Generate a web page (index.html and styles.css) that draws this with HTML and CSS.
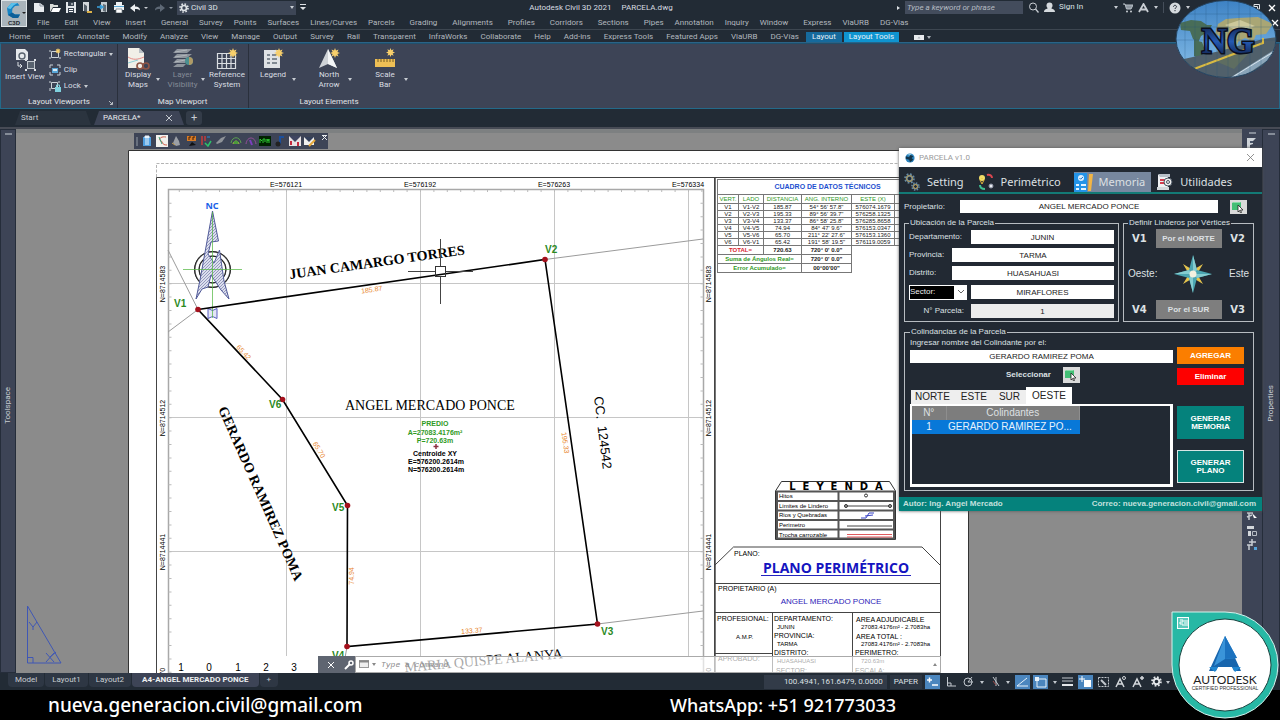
FILE: index.html
```html
<!DOCTYPE html>
<html lang="es">
<head>
<meta charset="utf-8">
<title>Autodesk Civil 3D 2021 - PARCELA.dwg</title>
<link rel="stylesheet" href="styles.css">
</head>
<body>
<svg class="defs" aria-hidden="true">
  <defs>
    <symbol id="sun" viewBox="0 0 10 10"><path d="M5 0l1 2.6L8.5 1.500 7.400 4 10 5 7.400 6 8.500 8.500 6 7.400 5 10 4 7.400 1.500 8.500 2.600 6 0 5 2.600 4 1.500 1.500 4 2.600z" fill="#f7cf6b"/></symbol>
    <symbol id="gear" viewBox="0 0 12 12"><circle cx="6" cy="6" r="3" fill="none" stroke="currentColor" stroke-width="2"/><circle cx="6" cy="6" r="4.800" fill="none" stroke="currentColor" stroke-width="2" stroke-dasharray="1.900 1.870"/></symbol>
    <symbol id="pick" viewBox="0 0 14 12"><path d="M1 2l2-1h7v8H1z" fill="#43bf75"/><path d="M1 2l2-1h7l-1 1z" fill="#8adba8"/><path d="M7 4l5 5H9.500l1 2.500-1 .500-1-2.500L7 11z" fill="#fff" stroke="#222" stroke-width=".8"/></symbol>
    <symbol id="earth" viewBox="0 0 12 12"><circle cx="6" cy="6" r="5.500" fill="#2b83bd"/><path d="M1 4l4 1 1-3 4 2-2 2 2 2-4 3-1-3-4-1z" fill="#123449"/><path d="M3 2l3-1 2 1-3 1z" fill="#8cc9e6"/></symbol>
    <pattern id="hatch" width="3" height="3" patternUnits="userSpaceOnUse"><rect width="3" height="3" fill="#dcdfee"/><path d="M0 3L3 0" stroke="#8287b0" stroke-width=".8"/></pattern>
  </defs>
</svg>

<header class="chrome">
  <button class="app-btn" aria-label="C3D">
    <svg width="26" height="27" viewBox="0 0 26 27"><rect x=".5" y=".5" width="25" height="26" fill="#a9b4bb" stroke="#dfe5e8"/><path d="M18.500 5.500l-2-2.500h-6L6 8l1 7 5 3h5l2-3.500h-5l-3-2 .500-4L14 6z" fill="#1583c4"/><path d="M6 8l4.500-5h6l-4 2.500L9.500 9z" fill="#5bc0ea"/><path d="M7 15l4-2.500 3 2h5L17 18h-5z" fill="#0d5f98"/><path d="M21 12h4l-2 2z" fill="#222"/><text x="13" y="25" class="app-txt">C3D</text></svg>
  </button>
  <div class="title-row">
    <div class="qat">
      <button aria-label="Nuevo"><svg width="12" height="11"><path d="M1 1h6l4 3v6H1z" fill="#e8ecef"/><path d="M7 1v3h4" stroke="#8b95a0" fill="none"/></svg></button>
      <button aria-label="Abrir"><svg width="12" height="11"><path d="M1 10V2h3l1 1h4v2H4z" fill="#d9dcd8"/><path d="M2 10l2-4h8l-2 4z" fill="#fff"/></svg></button>
      <button aria-label="Guardar"><svg width="12" height="11"><path d="M1 0h10v11H1z" fill="#e3e7ea"/><path d="M3 0h6v4H3zM3 6h6v5H3z" fill="#37424f"/><path d="M4 7.500h4M4 9.500h4M7 1v2" stroke="#fff"/></svg></button>
      <button aria-label="Abrir web"><svg width="12" height="11"><path d="M2 0h6v9H2z" fill="#d3d7da"/><path d="M3 2l3 2v6L3 9z" fill="#555f68"/><path d="M6 9h5v2H6z" fill="#ddb249"/></svg></button>
      <button aria-label="Guardar web"><svg width="12" height="11"><path d="M4 0h6v10H4z" fill="#c5ccd1"/><path d="M6 2l3 1v7L6 9z" fill="#626e78"/><path d="M0 5h5M3 3l3 2-3 2" stroke="#3ba3df" fill="none" stroke-width="1.500"/></svg></button>
      <button aria-label="Imprimir"><svg width="12" height="11"><path d="M3 0h6v3H3zM1 3h10v5H1z" fill="#eef1f3"/><path d="M1 4h10v1H1z" fill="#5da9d6"/><path d="M3 7h6v4H3z" fill="#fff" stroke="#68737d" stroke-width=".7"/></svg></button>
      <button aria-label="Deshacer"><svg width="20" height="11"><path d="M1 6l5-4v2.500c3 0 5 1 5 4C10 7 8 7 6 7v3z" fill="#edf0f2"/><path d="M15 5h4l-2 2z" fill="#c7ccd2"/></svg></button>
      <button aria-label="Rehacer"><svg width="20" height="11"><path d="M12 6L7 2v2.500c-3 0-5 1-5 4C3 7 5 7 7 7v3z" fill="#5d6875"/><path d="M16 5h4l-2 2z" fill="#9099a3"/></svg></button>
      <label class="workspace-pick"><svg class="gear-ico" width="10" height="10"><use href="#gear"/></svg><select aria-label="Espacio de trabajo"><option>Civil 3D</option></select><i class="caret"></i></label>
      <button aria-label="Personalizar"><svg width="6" height="9"><path d="M0 1h6v1H0zM0 4h6L3 7z" fill="#dde1e5"/></svg></button>
    </div>
    <div class="doc-title">Autodesk Civil 3D 2021 &nbsp; &nbsp; PARCELA.dwg</div>
    <div class="info">
      <i class="play"></i>
      <input class="kw" type="text" aria-label="Buscar" placeholder="Type a keyword or phrase">
      <svg width="11" height="11"><circle cx="5" cy="4.500" r="3.500" fill="none" stroke="#c9ced4"/><path d="M7.500 7l3 3.500" stroke="#c9ced4" stroke-width="1.300"/></svg>
      <button class="sign"><svg width="11" height="11"><circle cx="5.500" cy="3.500" r="3" fill="#d5dade"/><path d="M0 10c0-3 3-3 4-4h3c1 1 4 1 4 4z" fill="#d5dade"/></svg>Sign In</button>
      <i class="caret far"></i>
      <svg width="10" height="10"><path d="M0 1h2l1.500 5H8L10 2H2.500" fill="#8d96a0" stroke="#b8c0c7"/><circle cx="4" cy="8.500" r="1" fill="#c9ced4"/><circle cx="8" cy="8.500" r="1" fill="#c9ced4"/></svg>
      <svg width="11" height="10"><path d="M1 9l4.500-8L10 9M2 6.500h7" stroke="#c9ced4" stroke-width="1.800" fill="none"/></svg>
      <i class="caret"></i><i class="vr"></i>
      <svg width="12" height="12"><circle cx="6" cy="6" r="5.500" fill="#d5dade"/><path d="M4.500 4.800c0-2 3-2 3 0 0 1-1.500 1-1.500 2.200M6 8v1.200" stroke="#222b35" fill="none"/></svg>
      <i class="caret"></i>
    </div>
    <div class="win">
      <button aria-label="Restaurar"><svg width="8" height="8"><path d="M2 2V.5h5.500V5H6M.5 2.500h5v5h-5z" fill="none" stroke="#dfe3e6"/></svg></button>
      <button aria-label="Cerrar"><svg width="8" height="8"><path d="M1 1l6 6M7 1L1 7" stroke="#fff" stroke-width="1.300"/></svg></button>
    </div>
  </div>
  <nav class="menu" aria-label="Menú">
    <button>File</button><button>Edit</button><button>View</button><button>Insert</button><button>General</button><button class="tight">Survey</button><button class="tight">Points</button><button class="tight">Surfaces</button><button class="tight">Lines/Curves</button><button class="tight">Parcels</button><button>Grading</button><button>Alignments</button><button>Profiles</button><button>Corridors</button><button>Sections</button><button>Pipes</button><button class="tight">Annotation</button><button class="tight">Inquiry</button><button class="tight">Window</button><button>Express</button><button class="tight">ViaURB</button><button class="tight">DG-Vias</button>
    <button class="doc-x" aria-label="Cerrar dibujo"><svg width="8" height="8"><path d="M1 1l6 6M7 1L1 7" stroke="#fff" stroke-width="1.300"/></svg></button>
  </nav>
  <nav class="rtabs" aria-label="Cinta">
    <button>Home</button><button>Insert</button><button>Annotate</button><button>Modify</button><button>Analyze</button><button>View</button><button>Manage</button><button>Output</button><button>Survey</button><button>Rail</button><button>Transparent</button><button>InfraWorks</button><button>Collaborate</button><button>Help</button><button>Add-ins</button><button>Express Tools</button><button>Featured Apps</button><button>ViaURB</button><button>DG-Vías</button><button class="on">Layout</button><button class="ctx">Layout Tools</button>
    <button class="mini" aria-label="Minimizar"><svg width="18" height="7"><rect y="1" width="10" height="5" fill="#e8ebee"/><path d="M3.500 4.500h3L5 2.500zM13 2h4l-2 3z" fill="#aab0b8"/></svg></button>
  </nav>
</header>

<section class="ribbon">
  <div class="panel p1">
    <div class="tools">
      <button class="big"><svg width="24" height="24"><path d="M3 1h9l3 3v8H3z" fill="#e6e9ec"/><circle cx="9" cy="8" r="3" fill="none" stroke="#59636f" stroke-width="1.400"/><path d="M5 14v4h4M7 16l2 2-2 2" fill="none" stroke="#dde1e5"/><rect x="14.500" y="13.500" width="7" height="7" fill="#58626f" stroke="#c2c8ce"/><path d="M12 11h2v2h-2zM21 11h2v2h-2zM12 21h2v2h-2zM21 21h2v2h-2z" fill="#dde1e5"/></svg>Insert View</button>
      <div class="stack">
        <button><svg width="12" height="12"><path d="M2.500 3.500h7v6h-7zM1 2v2M1 9v2M11 9v2" fill="none" stroke="#ccd2d8"/><use href="#sun" x="6" y="0" width="6" height="6"/></svg>Rectangular<i class="caret"></i></button>
        <button><svg width="12" height="12"><path d="M1 4V1h3M8 1h3v3M11 8v3H8M4 11H1V8" fill="none" stroke="#ccd2d8"/><rect x="3" y="4" width="6" height="5" fill="#59a7d8"/><path d="M4 5h4v2H4z" fill="#dcecf6"/></svg>Clip</button>
        <button><svg width="12" height="12"><path d="M2.500 2.500h6v6h-6zM1 1v2M10 1v2M1 8v3" fill="none" stroke="#ccd2d8"/><rect x="6" y="7" width="6" height="5" fill="#7fd0dd"/><path d="M7.500 7V5h3v2" fill="none" stroke="#7fd0dd"/></svg>Lock<i class="caret"></i></button>
      </div>
    </div>
    <div class="ptitle">Layout Viewports<svg class="launch" width="4" height="4"><path d="M0 0l3 3M3.500 1v2.500H1" stroke="#d5dade" fill="none" stroke-width=".8"/></svg></div>
  </div>
  <div class="panel p2">
    <div class="tools mid">
      <button class="big"><svg width="24" height="22"><path d="M2 0h11l5 5v15H2z" fill="#f1efe8"/><path d="M13 0l5 5h-5z" fill="#b9bfc5"/><path d="M2 9c5 3 9 3 16 0" stroke="#e58b87" fill="none"/><path d="M2 15l10-3" stroke="#8ed0d6"/><circle cx="14" cy="18" r="3" fill="none" stroke="#8f5647" stroke-width="1.700"/><circle cx="20" cy="18" r="3" fill="none" stroke="#8f5647" stroke-width="1.700"/></svg><span>Display<br>Maps</span><i class="caret"></i></button>
      <button class="big dis"><svg width="24" height="22"><path d="M6 1h15l-5 4H2zM6 6h15l-5 4H2zM6 11h12l-4 4H2zM6 16h9l-3 3H2z" fill="#8d949c"/><path d="M4 4l12-2M4 9l12-2M4 14l10-2" stroke="#b2b7bd"/><circle cx="18" cy="13" r="4" fill="#4b9091"/><path d="M18 9v8a4 4 0 0 0 0-8z" fill="#b09a66"/></svg><span>Layer<br>Visibility</span><i class="caret"></i></button>
      <button class="big"><svg width="24" height="22"><path d="M2.500 5.500h18v15h-18zM7 5v16M11.500 5v16M16 5v16M2 10.500h19M2 15.500h19" fill="none" stroke="#d9dde1" stroke-width="1.200"/><use href="#sun" x="13" y="0" width="10" height="10"/></svg><span>Reference<br>System</span></button>
    </div>
    <div class="ptitle">Map Viewport</div>
  </div>
  <div class="panel p3">
    <div class="tools wide">
      <button class="big"><svg width="24" height="22"><rect x="3" y="2" width="16" height="18" fill="#dfe2e5"/><path d="M6 7h3M6 11h3M6 15h3M11 7h5M11 11h5M11 15h5" stroke="#626c77" stroke-width="1.500"/><use href="#sun" x="13" y="0" width="10" height="10"/></svg><span>Legend</span><i class="caret"></i></button>
      <button class="big"><svg width="24" height="22"><path d="M11 1L2 20l9-4 9 4z" fill="#cfd3d7"/><path d="M11 1v15l9 4z" fill="#f3f5f6"/><use href="#sun" x="13" y="0" width="10" height="10"/></svg><span>North<br>Arrow</span><i class="caret"></i></button>
      <button class="big"><svg width="24" height="22"><rect x="2" y="11" width="20" height="8" fill="#eebf55"/><path d="M5 11v3M8 11v3M11 11v3M14 11v3M17 11v3M20 11v3" stroke="#735a23"/><use href="#sun" x="13" y="0" width="9" height="9"/></svg><span>Scale<br>Bar</span><i class="caret"></i></button>
    </div>
    <div class="ptitle">Layout Elements</div>
  </div>
</section>

<nav class="dtabs" aria-label="Documentos">
  <button class="dt">Start</button>
  <button class="dt on">PARCELA*<svg width="6" height="6"><path d="M0 0l6 6M6 0L0 6" stroke="#c5cad0"/></svg></button>
  <button class="plus">+</button>
</nav>

<main class="work">
  <aside class="rail left"><i class="grip"></i><span>Toolspace</span></aside>
  <div class="canvas">
    <svg class="sheet" width="1226" height="544" viewBox="16 129 1226 544">
      <rect x="16" y="129" width="1226" height="4" fill="#7d8081"/>
      <path d="M128.500 700V150.500H968.500V700" fill="#fff" stroke="#333"/>
      <path d="M156.500 177V163.500H940" fill="none" stroke="#b4b4b4" stroke-dasharray="3 1.500"/>
      <path d="M156.500 700V177.500H940.500V700M714.500 178V700" fill="none" stroke="#444"/>
      <path d="M715.500 178V700" stroke="#777"/>
      <path d="M168.500 700V189.500H703.500V700" fill="none" stroke="#a8a8a8" stroke-width="1.500"/>
      <path d="M286.500 190V656M420.500 190V656M554.500 190V656M688.500 190V656M169 283.500H703M169 417.500H703M169 551.500H703" stroke="#c6c6c6"/>
      <path d="M170 202.800V673M702 202.800V673" stroke="#bbb" stroke-width="3" stroke-dasharray="1 12.400"/>
      <path d="M178.800 191H703" stroke="#bbb" stroke-width="2" stroke-dasharray="1 12.400"/>
      <g class="coord">
        <text x="286" y="187">E=576121</text><text x="420" y="187">E=576192</text><text x="554" y="187">E=576263</text><text x="688" y="187">E=576334</text>
        <text transform="translate(165 284) rotate(-90)">N=8714583</text><text transform="translate(165 418) rotate(-90)">N=8714512</text><text transform="translate(165 552) rotate(-90)">N=8714441</text><text transform="translate(165 686) rotate(-90)">N=8714370</text>
        <text transform="translate(711 284) rotate(-90)">N=8714583</text><text transform="translate(711 418) rotate(-90)">N=8714512</text><text transform="translate(711 552) rotate(-90)">N=8714441</text><text transform="translate(711 686) rotate(-90)">N=8714370</text>
      </g>
      <path d="M168 250L198 309.500 168 332M545 259.500L703 239M597.500 624L703 611M347 646.500L345 658" fill="none" stroke="#9b9b9b"/>
      <circle cx="212.500" cy="269.500" r="15.500" fill="none" stroke="#666" stroke-width="5.500"/><circle cx="212.500" cy="269.500" r="15.500" fill="none" stroke="#fff" stroke-width="3"/><circle cx="212.500" cy="269.500" r="18" fill="none" stroke="#222"/><circle cx="212.500" cy="269.500" r="13.500" fill="none" stroke="#222"/>
      <path d="M212.500 211L218.500 241 211 242 208 254 214 263 219.500 250 224 281 229 299 221 290 211 275 208 287 202 289 196 299 200 280z" fill="url(#hatch)" stroke="#525b99"/>
      <path d="M208 308.500l4.500 2 4.500-2v10l-4.500-2-4.500 2z" fill="#e3e5f6" stroke="#5a5fc0"/>
      <path d="M183 269.500H242M212.500 212V318" stroke="#4db53b" stroke-width=".7"/>
      <text class="nc" x="212" y="209">NC</text>
      <path d="M198 309.500L545 259.500 597.500 624 347 646.500 347.500 505.500 282.500 399.500z" fill="none" stroke="#000" stroke-width="1.600"/>
      <g fill="#a4101c"><circle cx="198" cy="309.500" r="2.800"/><circle cx="545" cy="259.500" r="2.800"/><circle cx="597.500" cy="624" r="2.800"/><circle cx="347" cy="646.500" r="2.800"/><circle cx="347.500" cy="505.500" r="2.800"/><circle cx="282.500" cy="399.500" r="2.800"/></g>
      <g class="vert"><text x="174" y="307">V1</text><text x="545" y="253">V2</text><text x="601" y="635">V3</text><text x="332" y="659">V4</text><text x="332" y="511">V5</text><text x="269" y="408">V6</text></g>
      <g class="dist"><text transform="translate(372 292) rotate(-8)">185.87</text><text transform="translate(242 354) rotate(47)">65.42</text><text transform="translate(317 451) rotate(59)">65.70</text><text transform="translate(354 576) rotate(-90)">74.94</text><text transform="translate(472 633) rotate(-5)">133.37</text><text transform="translate(563 443) rotate(82)">195.33</text></g>
      <g class="owner">
        <text class="b" transform="translate(290 279) rotate(-8)">JUAN CAMARGO TORRES</text>
        <text class="b" transform="translate(218 409) rotate(66)">GERARDO RAMIREZ POMA</text>
        <text transform="translate(405 672) rotate(-5)">MARIA QUISPE ALANYA</text>
        <text x="345" y="410">ANGEL MERCADO PONCE</text>
      </g>
      <text class="cc" transform="translate(594 397) rotate(83)">CC.  124542</text>
      <g class="info-c"><g fill="#2f9a1e"><text x="435" y="426">PREDIO</text><text x="435" y="435">A=27083.4176m²</text><text x="435" y="443">P=720.63m</text></g><text x="435" y="456">Centroide XY</text><text x="436" y="464">E=576200.2614m</text><text x="436" y="472">N=576200.2614m</text></g>
      <path d="M436 444v5M433.500 446.500h5" stroke="#8c3040" stroke-width="1.500"/>
      <path d="M440.500 239V266M440.500 277V304M408 271.500H435M446 271.500H473" stroke="#444"/><rect x="435.500" y="266.500" width="10" height="10" fill="none" stroke="#333"/>
      <g class="scale"><text x="181" y="671">1</text><text x="209" y="671">0</text><text x="238" y="671">1</text><text x="266" y="671">2</text><text x="294" y="671">3</text></g>
      <g fill="none" stroke="#3f57b5"><path d="M27.500 606V663H61zM27.500 657.500h5.500v5.500M29 622l4 5 4-5M33 627v3M46 653l8 9M54 653l-8 9M50 657l6-5"/></g>

      <g><path d="M775.500 539.500V491l6-9.500h108l6 9.500v48.500z" fill="#fff" stroke="#333"/><path d="M776 491.500H895M776 501H895M776 510.500H895M776 520H895M776 529.500H895" stroke="#555" stroke-width="2"/><path d="M777 491V539M838.500 491V539M894 491V539M776 538.500H895" stroke="#555" stroke-width="2"/>
      <text class="ley" x="836" y="490">L  E  Y  E  N  D  A</text>
      <g class="leg"><text x="779" y="498">Hitos</text><text x="779" y="508">Limites de Lindero</text><text x="779" y="517">Rios y Quebradas</text><text x="779" y="527">Perimetro</text><text x="779" y="537">Trocha carrozable</text></g>
      <circle cx="866" cy="495.500" r="1.500" fill="none" stroke="#333"/><path d="M846 506H890M847 526H892" stroke="#444"/><circle cx="846" cy="506" r="1.500" fill="#999" stroke="#333"/><circle cx="890" cy="506" r="1.500" fill="#999" stroke="#333"/><path d="M861 518h5l3-5h5M865 516l8-1" fill="none" stroke="#3742c4"/><path d="M847 534.500H892M847 537H892" stroke="#e0595c"/></g>

      <path d="M715 565L733.500 547H922L940 565M715 583.500H940M715 612.500H940M772.500 612V673M852.500 612V673M715 653.500H772" fill="none" stroke="#444"/>
      <g class="blk"><text x="734" y="556">PLANO:</text><text x="718" y="591">PROPIETARIO (A)</text><text x="717" y="621">PROFESIONAL:</text><text x="774" y="621">DEPARTAMENTO:</text><text x="774" y="638">PROVINCIA:</text><text x="774" y="655">DISTRITO:</text><text x="776" y="673">SECTOR:</text><text x="856" y="622">AREA ADJUDICABLE</text><text x="856" y="639">AREA TOTAL :</text><text x="855" y="655">PERIMETRO:</text><text x="855" y="673">ESCALA:</text><text x="718" y="661">APROBADO:</text></g>
      <g class="blks"><text x="736" y="639">A.M.P.</text><text x="777" y="629">JUNIN</text><text x="777" y="646">TARMA</text><text x="777" y="663">HUASAHUASI</text><text x="861" y="629">27083.4176m² - 2.7083ha</text><text x="861" y="646">27083.4176m² - 2.7083ha</text><text x="861" y="663">720.63m</text></g>
      <text class="plano" x="836" y="573">PLANO PERIMÉTRICO</text><path d="M761 575.500H911" stroke="#2323c0"/>
      <text class="own2" x="831" y="604">ANGEL MERCADO PONCE</text>
    </svg>

    <table class="cuadro">
      <colgroup><col class="c1"><col class="c2"><col class="c3"><col class="c4"><col class="c5"><col class="c5"></colgroup>
      <thead><tr><th class="cap" colspan="6">CUADRO DE DATOS TÉCNICOS</th></tr>
      <tr class="hd"><th>VERT.</th><th>LADO</th><th>DISTANCIA</th><th>ANG. INTERNO</th><th>ESTE (X)</th><th></th></tr></thead>
      <tbody>
      <tr><td>V1</td><td>V1-V2</td><td>185.87</td><td>54° 56' 57.8"</td><td>576074.1679</td><td></td></tr>
      <tr><td>V2</td><td>V2-V3</td><td>195.33</td><td>89° 56' 39.7"</td><td>576258.1325</td><td></td></tr>
      <tr><td>V3</td><td>V3-V4</td><td>133.37</td><td>86° 58' 25.8"</td><td>576285.8658</td><td></td></tr>
      <tr><td>V4</td><td>V4-V5</td><td>74.94</td><td>84° 47' 9.6"</td><td>576153.0347</td><td></td></tr>
      <tr><td>V5</td><td>V5-V6</td><td>65.70</td><td>211° 22' 27.6"</td><td>576153.1360</td><td></td></tr>
      <tr><td>V6</td><td>V6-V1</td><td>65.42</td><td>191° 58' 19.5"</td><td>576119.0059</td><td></td></tr>
      </tbody>
      <tfoot>
      <tr><td class="red" colspan="2">TOTAL=</td><td>720.63</td><td>720° 0' 0.0"</td></tr>
      <tr><td class="grn" colspan="3">Suma de Ángulos Real=</td><td>720° 0' 0.0"</td></tr>
      <tr><td class="grn" colspan="3">Error Acumulado=</td><td>00°00'00"</td></tr>
      </tfoot>
    </table>

    <div class="float-bar">
      <i class="vgrip"></i>
      <button aria-label="Portapapeles"><svg width="12" height="12"><rect x="2" y="2" width="8" height="9" fill="#4f9fe0"/><path d="M4 1h4v2H4zM4 5h4M4 7h4M4 9h4" stroke="#e8f3fc" fill="#e8f3fc"/></svg></button>
      <button aria-label="Curva"><svg width="12" height="12"><rect width="12" height="12" fill="#f2f2ee"/><path d="M10 2C4 1 2 5 5 6s0 4 6 4" fill="none" stroke="#cf5d49"/><path d="M3 2l3 7" stroke="#3a9b75"/></svg></button>
      <button aria-label="Punto"><svg width="12" height="12"><path d="M3 8l3-7 3 5 1 4-4 1z" fill="#9b9fa5"/><path d="M2 8l3 2" stroke="#c7a457"/></svg></button>
      <button aria-label="Etiqueta"><svg width="12" height="12"><rect x="2" y="1" width="9" height="5" fill="#d77b25"/><path d="M4 11l3-4 4 3z" fill="#111"/><path d="M4 5V2h2M8 5V2h2" stroke="#401e06" fill="none"/></svg></button>
      <button aria-label="Vértices"><svg width="12" height="12"><path d="M2 1v9M5 1v5" stroke="#c53b3b" stroke-width="1.500"/><path d="M5 8l3 3 3-5" stroke="#2dc16a" fill="none" stroke-width="1.500"/><path d="M7 2h3" stroke="#2f87d0"/></svg></button>
      <button aria-label="Plano"><svg width="12" height="12"><path d="M1 8l5-5 5-2-4 6-5 2z" fill="#8f9399"/></svg></button>
      <button aria-label="Arco verde"><svg width="12" height="12"><path d="M1 8c1-7 9-7 10 0" fill="none" stroke="#5aa04f"/><path d="M3 9c1-4 5-4 6 0" fill="none" stroke="#a4c640"/><rect x="4" y="6" width="4" height="3" fill="#4c9a3c"/></svg></button>
      <button aria-label="Arco violeta"><svg width="12" height="12"><path d="M1 9c1-8 9-8 10 0" fill="none" stroke="#98509c"/><path d="M5 5l2 5" stroke="#7c3fc0" stroke-width="2"/></svg></button>
      <button aria-label="RDM"><svg width="12" height="12"><rect y="1" width="12" height="10" fill="#020"/><path d="M1 8V4l2 2M4 8V4h2v3M8 8V4l1 2 1-2v4" stroke="#2dc832" fill="none"/></svg></button>
      <button aria-label="Nota"><svg width="12" height="12"><path d="M6 9V2h4" stroke="#1b4f9c" fill="none" stroke-width="2"/><circle cx="4" cy="9" r="2.500" fill="#222"/></svg></button>
      <button aria-label="DG"><svg width="12" height="12"><rect y="1" width="12" height="10" fill="#e7e2e2"/><path d="M0 1l6 6 6-6z" fill="#3f4560"/><path d="M2 6v4M9 7v4" stroke="#c72a3c" stroke-width="2"/></svg></button>
      <button aria-label="Editar"><svg width="12" height="12"><rect y="2" width="10" height="8" fill="#f0f0ee"/><path d="M0 2l5 5 5-5z" fill="#34405a"/><path d="M5 11l6-6" stroke="#e4a83a" stroke-width="2"/></svg></button>
      <svg class="fx" width="5" height="5"><path d="M0 0l5 5M5 0L0 5M0 .5h5" stroke="#e6e9ec"/></svg>
    </div>

    <div class="cmd">
      <div class="cmd-tools"><i class="dots"></i><button aria-label="Cerrar"><svg width="6" height="6"><path d="M0 0l6 6M6 0L0 6" stroke="#fff"/></svg></button><button aria-label="Opciones"><svg width="10" height="10"><path d="M1 9l5-5" stroke="#fff" stroke-width="2"/><circle cx="7" cy="3" r="2" fill="none" stroke="#fff" stroke-width="1.500"/></svg></button></div>
      <div class="cmd-line"><svg width="17" height="9"><rect x=".5" y=".5" width="9" height="7" fill="#eee" stroke="#999"/><path d="M0 1.500h10" stroke="#888" stroke-width="2"/><path d="M13 3h4l-2 3z" fill="#888"/></svg><input type="text" aria-label="Comando" placeholder="Type a command"><i class="up"></i></div>
    </div>
  </div>
  <aside class="navbar"><i class="grip"></i>
    <svg width="10" height="10"><path d="M0 0h9L6 3v3L3 7v3H0z" fill="#cfd4d9"/><path d="M3 3h3v2H3z" fill="#4a5569"/></svg>
    <div class="nav-tools"><svg width="12" height="12"><path d="M1 2h6M3 2v7M1 6l5-2" stroke="#c7ccd2" stroke-width="1.500"/><path d="M6 2l5 5-3 0 1 3z" fill="#fff"/></svg><svg width="12" height="12"><path d="M1 1h7v3H1zM2 6h3v5H2z" fill="#d3d7db"/><path d="M6.500 6.500h4v4h-4z" fill="none" stroke="#b7bdc4"/></svg><svg width="12" height="12"><path d="M6 0v7M3 3h7M1 6h5M3 6v5" stroke="#c7ccd2" stroke-width="1.500"/><rect x="8" y="8" width="3" height="3" fill="#55a4dc"/></svg></div>
  </aside>
  <aside class="rail right"><i class="grip"></i><span>Properties</span></aside>

  <section class="dialog" aria-label="PARCELA v1.0">
    <div class="dlg-title"><svg width="10" height="10"><use href="#earth"/></svg><span>PARCELA v1.0</span><button aria-label="Cerrar ventana"><svg width="7" height="7"><path d="M0 0l7 7M7 0L0 7" stroke="#777" stroke-width=".8"/></svg></button></div>
    <nav class="dlg-tabs">
      <button><svg width="18" height="18"><g color="#688ba4"><use href="#gear" x="1" y="0" width="11" height="11"/><use href="#gear" x="8" y="9" width="9" height="9"/></g><circle cx="6.500" cy="5.500" r="3" fill="none" stroke="#b99544"/><circle cx="12.500" cy="13.500" r="2" fill="none" stroke="#b99544"/></svg>Setting</button>
      <button><svg width="18" height="18"><circle cx="5" cy="5" r="3" fill="#f1dc66"/><path d="M3 7l2 4 2-4M5 5v1" stroke="#e2b43b" fill="none"/><path d="M10 2c3-1 5 1 5 3" stroke="#da4750" stroke-width="2" fill="none"/><path d="M3 12c0 3 2 4 5 4" stroke="#3fbf92" stroke-width="2" fill="none"/><circle cx="14" cy="13" r="2" fill="#e8eaf0" stroke="#8d92a3"/></svg>Perimétrico</button>
      <button class="on"><svg width="20" height="19"><rect width="13" height="19" fill="#2494e8"/><path d="M15 1h4l-2 17h-3z" fill="#f2b544"/><circle cx="7" cy="5" r="3" fill="#dff0ff"/><path d="M5.500 5l1.200 1.200L9 4" stroke="#1b75c2" fill="none"/><path d="M2 12h3M2 16h3M7 12h5M7 16h5" stroke="#e3f3ff" stroke-width="2"/></svg>Memoria</button>
      <button><svg width="18" height="18"><path d="M2 2h10v15H2z" fill="#f0f1f3"/><path d="M2 1h12v3H4z" fill="#b9c0c8"/><path d="M4 7h5M4 10h4" stroke="#d33d4e" stroke-width="2"/><path d="M1 14h12v3H1z" fill="#d3d8dc"/><circle cx="12" cy="9" r="4" fill="#eee" stroke="#4d5865"/><circle cx="12" cy="9" r="1.500" fill="none" stroke="#4d5865"/></svg>Utilidades</button>
    </nav>
    <div class="dlg-body">
      <div class="prop"><label for="prop">Propietario:</label><input id="prop" type="text" value="ANGEL MERCADO PONCE"><button class="pick" aria-label="Seleccionar propietario"><svg width="14" height="12"><use href="#pick"/></svg></button></div>
      <div class="two">
        <fieldset class="ubi"><legend>Ubicación de la Parcela</legend>
          <div class="row"><label class="l" for="dep">Departamento:</label><input id="dep" type="text" value="JUNIN"></div>
          <div class="row s"><label class="l" for="prov">Provincia:</label><input id="prov" type="text" value="TARMA"></div>
          <div class="row s"><label class="l" for="dis">Distrito:</label><input id="dis" type="text" value="HUASAHUASI"></div>
          <div class="row pickrow"><div class="sel"><select aria-label="Tipo"><option>Sector:</option></select><svg width="6" height="4"><path d="M0 0l3 3 3-3" fill="none" stroke="#555" stroke-width=".9"/></svg></div><input type="text" aria-label="Sector" value="MIRAFLORES"></div>
          <div class="row"><label class="l r" for="num">N° Parcela:</label><input id="num" class="off" type="text" value="1"></div>
        </fieldset>
        <fieldset class="lin"><legend>Definir Linderos por Vértices</legend>
          <div class="vrow"><b>V1</b><button>Por el NORTE</button><b>V2</b></div>
          <div class="vrow mid"><span>Oeste:</span><svg width="38" height="40" viewBox="-19 -20 38 40"><path d="M-10-10L0-4 10-10 4 0 10 10 0 4-10 10-4 0z" fill="#e5c44e"/><path d="M0-19L4-4 19 0 4 4 0 19-4 4-19 0-4-4z" fill="#4ba5b1"/><path d="M0-19V0L4-4zM19 0H0L4 4zM0 19V0L-4 4zM-19 0H0L-4-4z" fill="#85ccd0"/><circle r="3.500" fill="#f5f1df"/></svg><span>Este</span></div>
          <div class="vrow"><b>V4</b><button>Por el SUR</button><b>V3</b></div>
        </fieldset>
      </div>
      <fieldset class="col"><legend>Colindancias de la Parcela</legend>
        <div class="colgrid">
          <div class="colmain">
            <label for="colin">Ingresar nombre del Colindante por el:</label>
            <input id="colin" type="text" value="GERARDO RAMIREZ POMA">
            <div class="selrow"><b>Seleccionar</b><button class="pick" aria-label="Seleccionar colindante"><svg width="14" height="12"><use href="#pick"/></svg></button></div>
            <div class="ctabs"><button>NORTE</button><button>ESTE</button><button>SUR</button><button class="on">OESTE</button></div>
            <div class="grid"><table><thead><tr><th class="n">N°</th><th>Colindantes</th></tr></thead><tbody><tr><td class="n">1</td><td>GERARDO RAMIREZ PO...</td></tr></tbody></table></div>
          </div>
          <div class="colbtns"><button class="add">AGREGAR</button><button class="del">Eliminar</button><button class="gen">GENERAR<br>MEMORIA</button><button class="gen bd">GENERAR<br>PLANO</button></div>
        </div>
      </fieldset>
    </div>
    <footer class="dlg-foot"><span>Autor: Ing. Angel Mercado</span><span>Correo: nueva.generacion.civil@gmail.com</span></footer>
  </section>
</main>

<div class="status">
  <nav class="ltabs"><button>Model</button><button>Layout1</button><button>Layout2</button><button class="on">A4-ANGEL MERCADO PONCE</button><button>+</button></nav>
  <div class="stools">
    <span class="coords">100.4941, 161.6479, 0.0000</span>
    <button class="paper">PAPER</button>
    <button class="hl" aria-label="Infer"><svg width="15" height="14"><path d="M2 5h5M4.500 2.500v5M7 10h6" stroke="#fff" stroke-width="1.500"/></svg></button>
    <button aria-label="Ortho"><svg width="15" height="14"><path d="M4.500 2v9H13M4 8h4v3" fill="none" stroke="#c2c8ce"/></svg></button>
    <button aria-label="Polar"><svg width="24" height="14"><circle cx="7" cy="7" r="4" fill="none" stroke="#c2c8ce"/><path d="M7 7h5M7 7l4-5" stroke="#c2c8ce"/><path d="M19 6h4l-2 3z" fill="#c2c8ce"/></svg></button>
    <button aria-label="Iso"><svg width="24" height="14"><path d="M5 2l6 9M8 2v9" stroke="#c2c8ce"/><path d="M5 6l3 4" stroke="#9b4a4a"/><path d="M18 6h4l-2 3z" fill="#c2c8ce"/></svg></button>
    <button class="hl" aria-label="Track"><svg width="15" height="14"><path d="M2 11L12 3M2 11h11" stroke="#e8f2fa"/></svg></button>
    <button class="hl" aria-label="Osnap"><svg width="15" height="14"><path d="M4 4h9v8H4z" fill="none" stroke="#e8f2fa"/><rect x="2" y="2" width="4" height="4" fill="#e8f2fa"/></svg></button>
    <button aria-label="Grosor"><svg width="24" height="14"><path d="M2 6h4L4 9z" fill="#c2c8ce"/><path d="M11 3h11M11 6h11" stroke="#c2c8ce"/><path d="M11 10h11" stroke="#e3e6e9" stroke-width="2"/></svg></button>
    <button class="hl" aria-label="Ciclo"><svg width="15" height="14"><rect x="6" y="5" width="7" height="7" fill="#fff"/><path d="M1 4h6M4 1v6" stroke="#fff"/></svg></button>
    <button aria-label="Filtro"><svg width="15" height="14"><rect x="2.500" y="2.500" width="10" height="9" fill="none" stroke="#c2c8ce" stroke-dasharray="2 1"/><path d="M5 5l5 5" stroke="#c2c8ce" stroke-width="2"/></svg></button>
    <button aria-label="Anotación"><svg width="14" height="14"><path d="M2 12l4-8 4 8M4 9h5" stroke="#d3d7db" stroke-width="1.500" fill="none"/><circle cx="10" cy="3" r="1.500" fill="none" stroke="#d3d7db"/></svg></button>
    <button aria-label="Escala"><svg width="14" height="14"><path d="M2 12l4-8 4 8M4 9h5M9 3h4M11 1v4" stroke="#d3d7db" stroke-width="1.500" fill="none"/></svg></button>
    <button aria-label="Ajustes"><svg width="24" height="14"><g color="#e3e6e9"><use href="#gear" x="3" y="1" width="11" height="11"/></g><path d="M18 6h4l-2 3z" fill="#c2c8ce"/></svg></button>
  </div>
</div>

<footer class="contact"><span class="mail">nueva.generacion.civil@gmail.com</span><span>WhatsApp: +51 921773033</span></footer>

<svg class="ng" width="102" height="79" viewBox="0 0 102 79">
  <defs><clipPath id="ngc"><ellipse cx="51" cy="39" rx="50" ry="38.500"/></clipPath><linearGradient id="sky" x1="0" y1="0" x2="0" y2="1"><stop offset="0" stop-color="#3d82c4"/><stop offset="1" stop-color="#8cc2ea"/></linearGradient><linearGradient id="ngf" x1="0" y1="0" x2="0" y2="1"><stop offset="0" stop-color="#111b3c"/><stop offset=".5" stop-color="#2459b2"/><stop offset="1" stop-color="#0b1230"/></linearGradient></defs>
  <g clip-path="url(#ngc)"><rect width="102" height="79" fill="url(#sky)"/><path d="M5 23l11-3 10 1 6 4 5 0-4 7-7 4-3 7-5-4-3-8-9-1zM19 40l8 2 3 8-5 9-6-3z" fill="#486d58"/><path d="M43 24l8-5 12-1 20-1 15 7-7 10-10 1-3 7-8-4-7 4-3 11-10-1-3-15-7-3z" fill="#a9a675"/><path d="M50 25l15-5 15 6-15 6z" fill="#cdc99b"/><path d="M0 61l45-10L88 39l14-2v45H0z" fill="#50606b"/><path d="M40 61l20-10 13 3-14 15z" fill="#5e6d61"/><path d="M19 69l69-26V38" stroke="#d8ba43" stroke-width="2" fill="none"/><path d="M53 79l49-31v6L65 79z" fill="#8aa5b9"/><path d="M56 78l44-27" stroke="#d7e2ea"/><path d="M10 0v79M20 0v79M31 0v79M42 0v79M53 0v79M64 0v79M75 0v79M86 0v79M0 14h102M0 27h102M0 40h102" stroke="#234e7c" stroke-opacity=".25"/></g>
  <ellipse cx="51" cy="39" rx="50" ry="38.500" fill="none" stroke="#24435f"/>
  <text x="53" y="53" class="ng-t">NG</text>
</svg>

<svg class="badge" width="108" height="108" viewBox="0 0 108 108">
  <path d="M1 1H54A53 53 0 1 1 1 54z" fill="#27b8a5" stroke="#d5f0ec"/>
  <circle cx="54" cy="54" r="46" fill="#fff" stroke="#15413d"/>
  <rect x="6.500" y="6.500" width="11" height="11" fill="#5ccabd" stroke="#fff"/><path d="M9 9h3v2H9v2h3v2M14 9v6M16 9v6" stroke="#fff" fill="none"/>
  <path d="M54 25L38 60h7l2-4h14l2 4h7z" fill="#1765ad"/><path d="M54 25L43 55l11-7 12-1z" fill="#3a94d9"/><path d="M54 25v23l12-1z" fill="#1c72bf"/><path d="M38 56h32l-6 5-3-5H47l-3 5z" fill="#2187d1"/>
  <text x="54" y="73" class="bd1">AUTODESK</text><text x="54" y="79" class="bd2">CERTIFIED PROFESSIONAL</text>
</svg>
</body>
</html>
```
FILE: styles.css
```css
* { box-sizing: border-box; }
body { margin: 0; min-height: 100vh; display: flex; flex-direction: column; position: relative; overflow: hidden; background: #000; color: #c8cdd2; font: 8px/10px Roboto, "Noto Sans", sans-serif; }
button { font: inherit; color: inherit; background: none; border: 0; padding: 0; margin: 0; white-space: nowrap; }
input, select { font: inherit; border: 0; padding: 0; margin: 0; border-radius: 0; min-width: 0; }
select { appearance: none; }
fieldset { margin: 0; padding: 0; min-width: 0; border: 1px solid #b7bcc1; }
svg { display: block; flex: none; }
.defs { position: absolute; width: 0; height: 0; }
.caret { flex: none; width: 0; height: 0; border: 2px solid transparent; border-top: 3px solid #c7ccd2; border-bottom: 0; }
.play { width: 0; height: 0; border: 2px solid transparent; border-left: 3px solid #dde1e5; border-right: 0; }

/* window chrome */
.chrome { display: grid; grid-template-columns: 28px 1fr; grid-template-rows: 15px 15px 13px; background: #222b35; }
.app-btn { grid-row: 1 / 3; padding-left: 1px; align-self: start; z-index: 1; }
.app-txt { font: bold 6px "Liberation Sans", sans-serif; fill: #1b242b; text-anchor: middle; }
.title-row { display: flex; align-items: center; }
.qat { display: flex; align-items: center; gap: 4px; padding-left: 5px; width: 278px; }
.workspace-pick { display: flex; align-items: center; flex: 1; gap: 2px; height: 14px; padding: 0 2px; background: #3d4656; }
.workspace-pick select { flex: 1; background: none; color: #dfe3e6; }
.gear-ico { color: #dfe3e6; }
.doc-title { flex: 1; text-align: center; color: #d8dce0; }
.info { display: flex; align-items: center; gap: 5px; width: 296px; padding-left: 1px; }
.kw { flex: none; width: 118px; height: 13px; padding: 0 2px; background: #434c5c; }
.kw::placeholder { color: #b5bbc2; font-style: italic; opacity: 1; }
.sign { display: flex; gap: 4px; color: #dfe3e6; margin-right: 26px; }
.vr { width: 1px; height: 11px; background: #454e5a; }
.win { display: flex; justify-content: flex-end; gap: 8px; width: 88px; padding-right: 4px; }
.menu { display: flex; align-items: center; padding: 2px 0 0 9px; border-bottom: 1px solid #3d4650; color: #b2b8bf; }
.menu button { margin-right: 15px; }
.menu button:has(+ .tight) { margin-right: 11px; }
.menu .doc-x { margin: 0 1px 0 auto; }
.rtabs { grid-column: 1 / 3; display: flex; align-items: stretch; padding: 2px 0 0 9px; border-bottom: 1px solid #2a6387; color: #b2b8bf; }
.rtabs button { margin-right: 13px; }
.rtabs .on { margin-left: -6px; margin-right: 2px; padding: 0 6px; background: #166a9c; color: #e6f1f8; }
.rtabs .ctx { padding: 0 5px; background: #0f94d0; color: #e6f1f8; margin-right: 15px; }

.ribbon { display: flex; height: 66px; background: #3d4456; border: 1px solid #236a8a; border-top-color: #20506c; color: #dadee2; }
.panel { display: flex; flex-direction: column; justify-content: space-between; padding: 4px 4px 1px; border-right: 1px solid #2a303c; }
.p1 { width: 117px; }
.p2 { width: 131px; padding: 4px 2px 1px 1px; }
.p3 { width: 160px; border: 0; }
.tools { display: flex; justify-content: space-between; }
.ptitle { text-align: center; color: #e0e3e6; position: relative; }
.launch { position: absolute; right: 0; bottom: 2px; }
.big { display: flex; flex-direction: column; align-items: center; position: relative; line-height: 10px; text-align: center; }
.big .caret { position: absolute; right: -3px; top: 30px; }
.dis { color: #848b96; }
.stack { display: flex; flex-direction: column; gap: 4px; flex: 1; margin-left: 4px; }
.stack button { display: flex; align-items: center; gap: 3px; }
.mid .big { width: 38px; }
.wide .big { width: 40px; }

.dtabs { display: flex; height: 20px; padding: 2px 0 2px 15px; background: #222b35; border-bottom: 2px solid #474b55; align-items: stretch; }
.dt { display: flex; align-items: center; justify-content: space-between; width: 76px; padding: 0 6px; background: #2b343f; clip-path: polygon(5px 0, calc(100% - 5px) 0, 100% 100%, 0 100%); }
.dt.on { width: 90px; margin-left: 3px; padding: 0 12px 0 9px; background: #3d4456; color: #e8ebee; }
.plus { width: 16px; margin-left: 2px; background: #333c48; font-size: 11px; border-radius: 3px; }

/* workspace */
.work { flex: 1; display: grid; grid-template-columns: 16px 1fr 20px 18px; grid-template-rows: 544px; position: relative; background: #3b4253; }
.rail { display: flex; flex-direction: column; align-items: center; background: #3d4456; border: 1px solid #252d3a; padding-top: 3px; }
.rail span { writing-mode: vertical-rl; transform: rotate(180deg); margin: auto 0; }
.left span { padding-bottom: 3px; }
.grip { width: 7px; height: 2px; background: #858c98; }
.canvas { position: relative; overflow: hidden; background: #8b8b8b; }
.sheet { display: block; }
.sheet text { font-family: "Liberation Sans", Arial, sans-serif; }
.coord { font-size: 7px; text-anchor: middle; }
.sheet .nc { font: bold 9px "Noto Sans", sans-serif; fill: #1b62e8; text-anchor: middle; }
.vert { font-size: 10px; font-weight: bold; fill: #2b8a1e; }
.dist { font-size: 7px; fill: #e8862c; text-anchor: middle; }
.sheet .owner text { font: 14px "Liberation Serif", "Times New Roman", serif; }
.sheet .owner .b { font-weight: bold; }
.cc { font-size: 13px; white-space: pre; }
.info-c { font-size: 7px; font-weight: bold; text-anchor: middle; }
.scale { font-size: 10px; text-anchor: middle; }
.sheet .ley { font: bold 10px "DejaVu Sans", sans-serif; text-anchor: middle; white-space: pre; }
.leg { font-size: 6px; }
.blk { font-size: 7px; }
.blks { font-size: 6px; }
.sheet .plano { font: bold 14px "Open Sans", sans-serif; fill: #1414c0; text-anchor: middle; }
.own2 { font-size: 8px; fill: #2c22b8; text-anchor: middle; }
.cuadro { position: absolute; left: 701px; top: 50px; width: 220px; border-collapse: collapse; table-layout: fixed; font: 6px/6px "Liberation Sans", Arial, sans-serif; color: #222; background: #fff; text-align: center; }
.cuadro td, .cuadro th { border: 1px solid #777; padding: 0; height: 7px; font-weight: normal; white-space: nowrap; }
.cuadro .cap { height: 15px; font-size: 7px; font-weight: bold; color: #1c4fcf; }
.cuadro .hd th { height: 9px; color: #2f9a1e; }
.cuadro tfoot td { height: 9px; font-weight: bold; }
.cuadro .red { color: #d8232f; }
.cuadro .grn { color: #2f9a1e; }
.c1 { width: 21px; } .c2 { width: 25px; } .c3 { width: 38px; } .c4 { width: 50px; } .c5 { width: 43px; }
.float-bar { position: absolute; left: 118px; top: 4px; width: 194px; height: 16px; padding: 0 12px 0 2px; display: flex; align-items: center; justify-content: space-between; background: #3d4456; }
.vgrip { width: 2px; height: 9px; background: #68707e; }
.fx { position: absolute; right: 1px; top: 2px; }
.cmd { position: absolute; left: 302px; bottom: 0; width: 623px; height: 17px; display: flex; }
.cmd-tools { width: 37px; display: flex; align-items: center; gap: 8px; padding: 0 2px; background: #5f6571; }
.cmd-tools button + button { margin-left: 2px; }
.dots { width: 4px; height: 11px; background: repeating-linear-gradient(#cfd2d6 0 1px, transparent 1px 3px); }
.cmd-line { flex: 1; display: flex; align-items: center; gap: 5px; padding: 0 3px; background: rgba(255, 255, 255, .65); border: 1px solid #aaa; }
.cmd-line input { flex: 1; background: none; }
.cmd-line input::placeholder { font: italic 8px "Liberation Mono", monospace; color: #8b8b8b; opacity: 1; }
.up { border: 2px solid transparent; border-bottom: 3px solid #888; border-top: 0; }
.navbar { display: flex; flex-direction: column; align-items: center; gap: 4px; padding-top: 3px; background: #3d4456; }
.nav-tools { margin-top: 359px; display: flex; flex-direction: column; gap: 2px; }

/* parcel dialog */
.dialog { position: absolute; right: 18px; top: 19px; width: 363px; background: #222933; color: #dde0e3; font: 8px/10px "Liberation Sans", Arial, sans-serif; box-shadow: 0 0 3px #555; }
.dlg-title { display: flex; align-items: center; gap: 4px; height: 19px; padding: 0 8px 0 6px; background: #fff; color: #9a9a9a; font-family: Roboto, sans-serif; }
.dlg-title button { margin-left: auto; }
.dlg-tabs { display: flex; height: 27px; padding: 5px 0 0 4px; border-bottom: 2px solid #137a76; font: 11px/18px "Noto Sans", sans-serif; }
.dlg-tabs button { display: flex; align-items: center; gap: 6px; margin-right: 13px; }
.dlg-tabs .on { gap: 5px; padding-right: 6px; margin-right: 5px; background: #77879f; }
.dlg-body { padding: 5px 8px 6px 5px; }
.dialog input { height: 13px; flex: 1; text-align: center; background: #fff; color: #222; }
.prop { display: flex; align-items: center; height: 15px; }
.prop label { width: 56px; }
.prop .pick { margin: 0 7px 0 12px; }
.pick { width: 17px; height: 14px; background: #dadada; padding: 1px; }
.two { display: flex; gap: 4px; margin-top: 4px; }
.dialog legend { padding: 0 1px; margin-left: 0; }
.ubi { flex: 1; padding: 2px 4px 3px 4px; }
.dialog .row input { height: 14px; }
.row { display: flex; align-items: center; height: 14px; margin-bottom: 4px; }
.dialog .pickrow { height: 16px; }
.row:last-child { margin-bottom: 0; }
.row .l { width: 62px; }
.row.s .l { width: 43px; }
.row .r { text-align: right; padding-right: 7px; }
.dialog .off { background: #ececec; }
.sel { width: 58px; height: 15px; margin-right: 4px; padding: 1px 3px 1px 1px; display: flex; align-items: center; justify-content: space-between; background: #fff; }
.sel select { width: 44px; height: 13px; background: #000; color: #eee; }
.lin { width: 131px; padding: 0 4px; }
.vrow { display: flex; justify-content: space-between; align-items: center; height: 19px; margin-top: 1px; padding: 0 4px; }
.vrow b { font: bold 10px "DejaVu Sans", sans-serif; }
.vrow button { width: 66px; height: 19px; background: #7e7e7e; font-weight: bold; }
.vrow.mid { height: 50px; font-size: 10px; padding: 0; }
.col { margin-top: 5px; padding: 0 9px 3px 5px; }
.colgrid { display: grid; grid-template-columns: 1fr 67px; gap: 4px; }
.colmain { display: flex; flex-direction: column; }
.colmain > label { margin-top: 1px; }
.dialog .colmain > input { flex: none; height: 13px; margin-top: 2px; }
.selrow { display: flex; align-items: center; height: 17px; margin: 3px 0 4px 96px; gap: 12px; }
.selrow .pick { height: 16px; padding-top: 2px; }
.ctabs { display: flex; align-items: flex-end; height: 17px; font-size: 10px; color: #222; padding-left: 1px; }
.ctabs button { height: 14px; padding: 0 5px 0 4px; background: #eee; }
.ctabs .on { height: 17px; background: #fff; }
.ctabs button + button { padding: 0 6px; }
.grid { height: 83px; border: 3px solid #fff; border-width: 2px 3px 3px 2px; font-size: 10px; }
.grid table { width: 168px; border-collapse: collapse; }
.grid th, .grid td { height: 14px; padding: 0 2px; font-weight: normal; white-space: nowrap; background: #7d7d7d; border-right: 1px solid #8e8e8e; }
.grid td { background: #0878d8; border: 0; color: #e7f2fc; }
.grid .n { width: 34px; text-align: center; }
.colbtns { display: flex; flex-direction: column; font-weight: bold; padding-top: 10px; color: #fff; }
.colbtns button { height: 17px; }
.colbtns .add { background: #fb7e00; margin-bottom: 4px; }
.colbtns .del { background: #fe0000; margin-bottom: 21px; }
.colbtns .gen { height: 33px; line-height: 8px; background: #05827c; margin-bottom: 11px; }
.colbtns .bd { border: 1px solid #d6e6e5; margin-bottom: 0; }
.dlg-foot { display: flex; justify-content: space-between; align-items: center; height: 14px; padding: 0 6px 0 4px; background: #05827c; font-weight: bold; color: #c3e0de; }

/* status and contact strips */
.status { display: flex; justify-content: space-between; height: 17px; padding-right: 108px; background: #222b35; }
.ltabs { display: flex; padding: 0 0 3px 8px; gap: 1px; }
.ltabs button { padding: 0 7px; background: #2e3744; border-radius: 0 0 4px 4px; }
.ltabs .on { background: #3d4456; color: #eef0f2; font-weight: bold; padding: 0 10px; }
.stools { display: flex; align-items: center; gap: 3px; color: #dde0e4; }
.stools button { height: 14px; }
.coords { padding: 2px 4px 2px 20px; background: #323b48; }
.stools .paper { padding: 0 4px; background: #2c3541; }
.hl { background: #4b86be; }
.contact { display: flex; align-items: center; height: 30px; padding-left: 48px; background: #000; color: #fff; font: 500 18px/30px "Noto Sans", sans-serif; }
.contact .mail { width: 622px; font-size: 19px; }
.ng { position: absolute; right: 3px; top: 0; z-index: 2; }
.ng-t { font: bold 35px "Liberation Serif", serif; fill: url(#ngf); stroke: #0a0f1e; stroke-width: 3px; paint-order: stroke; text-anchor: middle; }
.badge { position: absolute; right: 1px; bottom: 1px; z-index: 2; }
.bd1 { font: 12px "Lato", sans-serif; fill: #222; text-anchor: middle; }
.bd2 { font: 5px "Liberation Sans", sans-serif; fill: #333; text-anchor: middle; }
```
